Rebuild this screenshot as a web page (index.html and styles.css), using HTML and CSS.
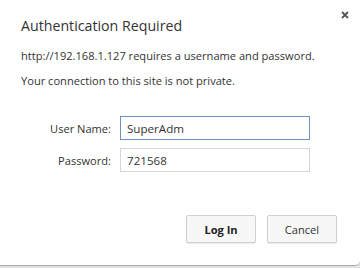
FILE: index.html
```html
<!DOCTYPE html>
<html lang="en">
<head>
    <meta charset="UTF-8">
    <title>Authentication Required</title>
    <link rel="stylesheet" href="styles.css">
</head>
<body>
    <div class="dialog">
        <div class="dialog-head">
            <h1>Authentication Required</h1>
            <button class="close" aria-label="Close">
                <svg width="8" height="8" viewBox="0 0 8 8"><path d="M1 1L7 7M7 1L1 7" stroke="#555" stroke-width="1.8"/></svg>
            </button>
        </div>
        <p class="info">http://192.168.1.127 requires a username and password.</p>
        <p class="info">Your connection to this site is not private.</p>

        <div class="fields">
            <label class="label" for="user">User Name:</label>
            <input class="field focused" id="user" type="text" value="SuperAdm">
            <label class="label" for="pass">Password:</label>
            <input class="field" id="pass" type="text" value="721568">
        </div>

        <div class="actions">
            <button class="btn primary">Log In</button>
            <button class="btn">Cancel</button>
        </div>
    </div>
</body>
</html>
```

FILE: styles.css
```css
body {
    margin: 0;
    padding: 0;
    background: #e2e2e2;
    font-family: 'Open Sans', 'Noto Sans', sans-serif;
    color: #333;
}

.dialog {
    width: 360px;
    height: 266px;
    box-sizing: border-box;
    background: #fff;
    border-bottom: 1px solid #a8a8a8;
    border-radius: 0 0 5px 0;
    padding: 0 23px 0 21px;
    display: flex;
    flex-direction: column;
}

.dialog-head {
    display: flex;
    justify-content: space-between;
    align-items: flex-start;
    padding-top: 16px;
}

h1 {
    margin: 0;
    font-size: 14.2px;
    font-weight: normal;
    color: #333;
    line-height: 20px;
}

.close {
    border: none;
    background: none;
    padding: 0;
    margin: -5px -12px 0 0;
    width: 8px;
    height: 8px;
    display: flex;
}

.info {
    margin: 0;
    font-size: 11.1px;
    line-height: 25px;
}

.dialog-head + .info {
    margin-top: 7px;
}

.fields {
    display: grid;
    grid-template-columns: 90px 190px;
    column-gap: 9px;
    row-gap: 8px;
    align-items: center;
    margin-top: 23px;
}

.label {
    text-align: right;
    font-size: 11.1px;
}

.field {
    height: 24px;
    box-sizing: border-box;
    border: 1px solid #d6d6d6;
    padding: 0 6px;
    font-family: inherit;
    font-size: 11.6px;
    color: #333;
    outline: none;
}

.field.focused {
    border-color: #6f90c2;
}

.actions {
    display: flex;
    justify-content: flex-end;
    gap: 11px;
    margin-top: 43px;
}

.btn {
    width: 70px;
    height: 28px;
    border: 1px solid #cfcfcf;
    border-radius: 2px;
    background: #f7f7f7;
    font-family: inherit;
    font-size: 11.1px;
    color: #333;
    box-shadow: 0 1px 1px rgba(0, 0, 0, 0.08);
}

.btn.primary {
    font-weight: bold;
    color: #222;
}
```
